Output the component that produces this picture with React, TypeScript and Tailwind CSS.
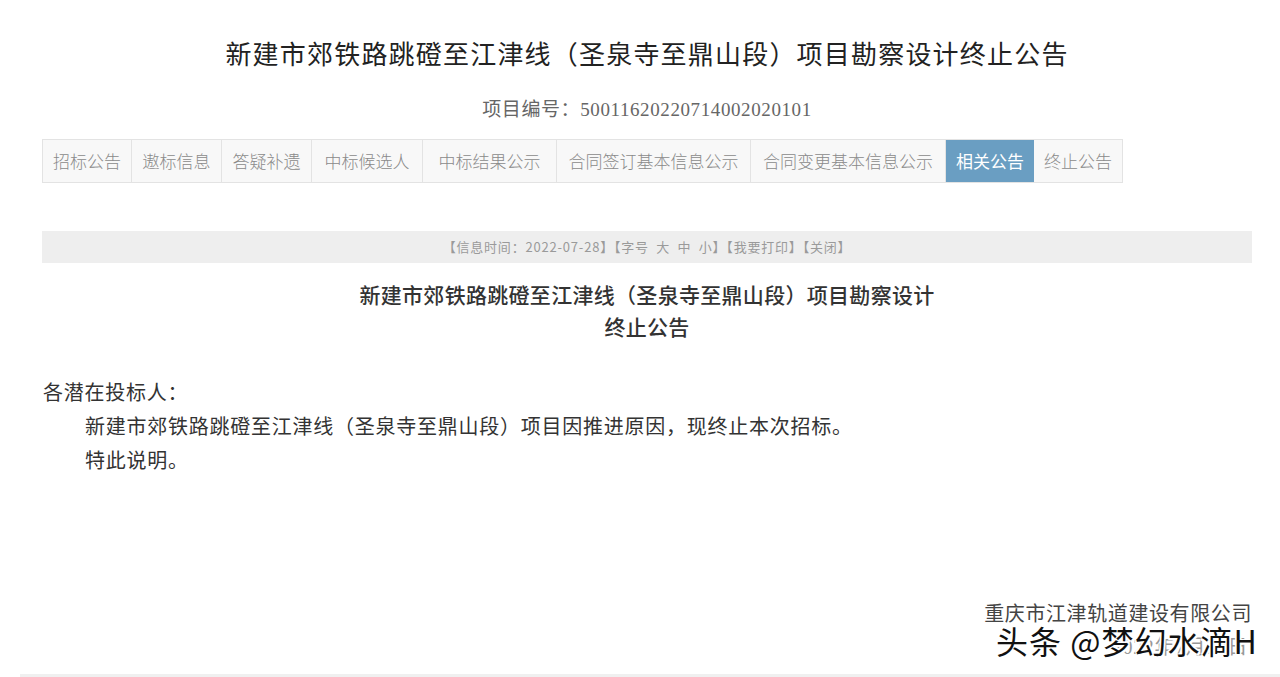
import React from "react";

const tabs: { label: string; w: string; active?: boolean }[] = [
  { label: "招标公告", w: "w-[89px]" },
  { label: "遨标信息", w: "w-[90px]" },
  { label: "答疑补遗", w: "w-[90px]" },
  { label: "中标候选人", w: "w-[111px]" },
  { label: "中标结果公示", w: "w-[134px]" },
  { label: "合同签订基本信息公示", w: "w-[194px]" },
  { label: "合同变更基本信息公示", w: "w-[195px]" },
  { label: "相关公告", w: "w-[88px]", active: true },
  { label: "终止公告", w: "w-[89px]" },
];

export default function App() {
  return (
    <div className="relative flex h-[677px] flex-col overflow-hidden bg-white font-['Liberation_Serif','Noto_Sans_CJK_SC',serif]">
      <div className="flex flex-col pl-[42px] pr-[28px] pt-[38px]">
        <h1 className="h-[36px] text-center text-[26px] leading-[36px] tracking-[1.2px] text-[#222]">
          新建市郊铁路跳磴至江津线（圣泉寺至鼎山段）项目勘察设计终止公告
        </h1>
        <div className="mt-[21px] h-[30px] text-center text-[19px] leading-[30px] tracking-[0.6px] text-[#666]">
          项目编号：50011620220714002020101
        </div>
        <div className="mt-[14px] flex">
          <div className="flex border-y border-l border-[#e3e3e3]">
            {tabs.map((t) => (
              <div
                key={t.label}
                className={
                  t.active
                    ? `${t.w} flex h-[42px] items-center justify-center bg-[#6a9ec2] font-['Noto_Sans_CJK_SC',sans-serif] text-[17px] text-white`
                    : `${t.w} flex h-[42px] items-center justify-center border-r border-[#e3e3e3] bg-[#f8f8f8] font-['Noto_Sans_CJK_SC',sans-serif] text-[17px] font-light text-[#8a8a8a]`
                }
              >
                {t.label}
              </div>
            ))}
          </div>
        </div>
        <div className="mt-[48px] flex h-[32px] items-center justify-center whitespace-pre bg-[#eeeeee] font-['Noto_Sans_CJK_SC',sans-serif] text-[13px] tracking-[0.8px] text-[#9a9a9a]">
          {"【信息时间：2022-07-28】【字号  大  中  小】【我要打印】【关闭】"}
        </div>
        <div className="mt-[17px] text-center text-[21px] font-medium leading-[32px] tracking-[0.3px] text-[#333]">
          <div>新建市郊铁路跳磴至江津线（圣泉寺至鼎山段）项目勘察设计</div>
          <div>终止公告</div>
        </div>
        <div className="mt-[32px] pl-[1px] text-[20px] leading-[34px] tracking-[0.75px] text-[#333]">
          <div>各潜在投标人：</div>
          <div className="pl-[42px]">
            新建市郊铁路跳磴至江津线（圣泉寺至鼎山段）项目因推进原因，现终止本次招标。
          </div>
          <div className="pl-[42px]">特此说明。</div>
        </div>
        <div className="mt-[121px] flex flex-col items-end text-[20px] tracking-[0.6px] text-[#444]">
          <div className="leading-[30px]">重庆市江津轨道建设有限公司</div>
          <div className="pr-[4px] leading-[36px] text-[#999]">2022年7月28日</div>
        </div>
      </div>
      <div className="mt-auto ml-[20px] h-[3px] bg-[#f0f0f0]" />
      <div className="absolute left-[996px] top-[620px] font-['Noto_Sans_CJK_SC',sans-serif] text-[32px] leading-[40px] tracking-[1px] text-[#111] [text-shadow:1.5px_1.5px_0_#fff,-1.5px_-1.5px_0_#fff,1.5px_-1.5px_0_#fff,-1.5px_1.5px_0_#fff]">
        头条 @梦幻水滴H
      </div>
    </div>
  );
}
